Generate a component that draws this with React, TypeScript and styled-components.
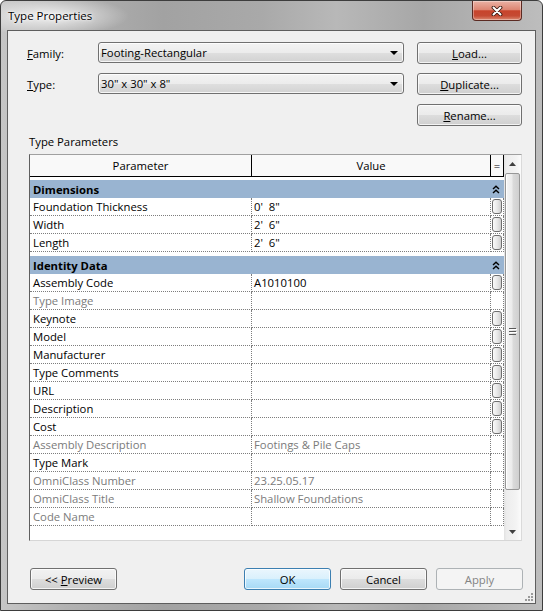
import React from "react";
import styled, { createGlobalStyle } from "styled-components";

const UI_FONT = `"Segoe UI", "Open Sans", "Noto Sans", Arial, sans-serif`;

const GlobalStyle = createGlobalStyle`
  html, body { margin: 0; padding: 0; background: #ffffff; }
  #root { width: 543px; height: 611px; }
`;

const Window = styled.div`
  position: relative;
  width: 543px;
  height: 611px;
  box-sizing: border-box;
  display: flex;
  flex-direction: column;
  border: 1px solid #3d3d3d;
  border-radius: 6px 6px 0 0;
  overflow: hidden;
  background:
    radial-gradient(ellipse 80px 20px at 48px 15px, rgba(255, 255, 255, 0.8), rgba(255, 255, 255, 0) 100%),
    linear-gradient(90deg, #c6c6c6 0%, #b2b2b2 12%, #a2a2a2 30%, #a9a9a9 48%, #b8b8b8 62%, #a7a7a7 78%, #bdbdbd 100%);
  font-family: ${UI_FONT};
  font-size: 11.3px;
  color: #000;
`;

const TitleBar = styled.div`
  flex: none;
  height: 29px;
  display: flex;
  justify-content: space-between;
  align-items: flex-start;
`;

const Title = styled.div`
  padding: 7px 0 0 7px;
  font-size: 11.5px;
  line-height: 15px;
  text-shadow: 0 0 5px #fff, 0 0 2px #fff;
`;

const CloseButton = styled.div`
  width: 50px;
  height: 20px;
  margin-right: 20px;
  box-sizing: border-box;
  border: 1px solid #5b2a22;
  border-top: none;
  border-radius: 0 0 4px 4px;
  background: linear-gradient(#eab2a5 0%, #dd8673 45%, #c7442c 52%, #c54a33 78%, #dc8a72 100%);
  box-shadow: inset 0 0 0 1px rgba(255, 255, 255, 0.35);
  display: flex;
  align-items: center;
  justify-content: center;
`;

const Client = styled.div`
  position: relative;
  flex: 1;
  margin: 0 6px 6px 6px;
  box-sizing: border-box;
  border: 1px solid #5e5e5e;
  background: #f0f0f0;
  display: flex;
  flex-direction: column;
  padding: 11px 12px 0 19px;
`;

const TopGrid = styled.div`
  display: grid;
  grid-template-columns: 58px 306px 105px;
  grid-auto-rows: 22px;
  column-gap: 13px;
  row-gap: 9px;
`;

const FieldLabel = styled.div`
  align-self: center;
  line-height: 15px;
`;

const Combo = styled.div`
  align-self: start;
  height: 21px;
  box-sizing: border-box;
  border: 1px solid #707070;
  border-radius: 3px;
  background: linear-gradient(#f3f3f3 0%, #ececec 50%, #dfdfdf 51%, #d2d2d2 100%);
  box-shadow: inset 0 0 0 1px rgba(255, 255, 255, 0.8);
  display: flex;
  align-items: center;
  justify-content: space-between;
  padding: 0 5px 0 2px;
  line-height: 15px;
`;

const DropArrow = styled.span`
  width: 0;
  height: 0;
  border-left: 4px solid transparent;
  border-right: 4px solid transparent;
  border-top: 4px solid #000;
`;

const PushButton = styled.button<{ $default?: boolean }>`
  font: inherit;
  color: #000;
  height: 22px;
  width: 100%;
  box-sizing: border-box;
  padding: 0;
  border: 1px solid ${(p) => (p.$default ? "#3c7fb1" : "#707070")};
  border-radius: 3px;
  background: ${(p) =>
    p.$default
      ? "linear-gradient(#eaf6fd 0%, #d9f0fc 50%, #bee6fd 51%, #a7d9f5 100%)"
      : "linear-gradient(#f2f2f2 0%, #ebebeb 50%, #dddddd 51%, #cfcfcf 100%)"};
  box-shadow: inset 0 0 0 1px rgba(255, 255, 255, 0.75);
  line-height: 15px;
  cursor: default;

  &:disabled {
    border-color: #adb2b5;
    background: #f4f4f4;
    color: #838383;
    box-shadow: none;
  }
`;

const FooterButton = styled(PushButton)`
  width: 87px;
`;

const SectionLabel = styled.div`
  margin: 8px 0 0 2px;
  line-height: 15px;
`;

const ParamTable = styled.div`
  margin: 5px 0 0 2px;
  width: 493px;
  height: 387px;
  box-sizing: border-box;
  border-top: 1px solid #a0a0a0;
  border-left: 1px solid #5f5f5f;
  border-right: 1px solid #dadada;
  border-bottom: 1px solid #d6d6d6;
  background: #fff;
  display: flex;
`;

const GridArea = styled.div`
  width: 474px;
  display: flex;
  flex-direction: column;
`;

const COLUMNS = "222px 239px 13px";

const HeaderRow = styled.div`
  flex: none;
  display: grid;
  grid-template-columns: ${COLUMNS};
  height: 22px;
  box-sizing: border-box;
  border-bottom: 1px solid #000;
  background: #f9f9f9;
`;

const HeaderCell = styled.div`
  border-right: 1px solid #000;
  display: flex;
  align-items: center;
  justify-content: center;
  line-height: 15px;
`;

const GroupRow = styled.div<{ $first?: boolean }>`
  flex: none;
  margin-top: ${(p) => (p.$first ? 3 : 4)}px;
  height: 18px;
  background: #99b4d1;
  display: flex;
  align-items: center;
  justify-content: space-between;
  padding: 0 4px 0 3px;
  font-weight: bold;
`;

const DataRow = styled.div`
  flex: none;
  display: grid;
  grid-template-columns: ${COLUMNS};
  height: 18px;
`;

const Cell = styled.div<{ $muted?: boolean; $pad?: number }>`
  box-sizing: border-box;
  border-right: 1px dotted #7d7d7d;
  border-bottom: 1px dotted #7d7d7d;
  padding-left: ${(p) => p.$pad ?? 3}px;
  line-height: 17px;
  white-space: pre;
  overflow: hidden;
  color: ${(p) => (p.$muted ? "#7b7b7b" : "#000")};
`;

const ButtonCell = styled.div`
  box-sizing: border-box;
  border-right: 1px dotted #7d7d7d;
  border-bottom: 1px dotted #7d7d7d;
  padding: 1px 0 0 1px;
`;

const AssocButton = styled.div`
  width: 10px;
  height: 15px;
  box-sizing: border-box;
  border: 1px solid #6e6e6e;
  border-radius: 3px;
  background: linear-gradient(90deg, #fafafa 0%, #e9e9e9 50%, #d0d0d0 100%);
`;

const ScrollBar = styled.div`
  width: 17px;
  display: flex;
  flex-direction: column;
  background: linear-gradient(90deg, #e2e2e2 0%, #ededed 15%, #f3f3f3 70%, #fbfbfb 100%);
`;

const ArrowButton = styled.div`
  flex: none;
  height: 17px;
  display: flex;
  align-items: center;
  justify-content: center;
`;

const Track = styled.div`
  flex: 1;
  display: flex;
  flex-direction: column;
`;

const Thumb = styled.div`
  flex: none;
  height: 317px;
  margin: 1px 1px 0 1px;
  box-sizing: border-box;
  border: 1px solid #979797;
  border-radius: 2px;
  background: linear-gradient(90deg, #f6f6f6 0%, #ebebeb 45%, #dadada 55%, #cfcfcf 100%);
  box-shadow: inset 1px 0 0 #fff;
  display: flex;
  align-items: center;
  justify-content: center;
`;

const Footer = styled.div`
  margin-top: 27px;
  padding-left: 3px;
  display: flex;
  justify-content: space-between;
`;

const FooterGroup = styled.div`
  display: flex;
  gap: 9px;
`;

const ResizeGrip = styled.svg`
  position: absolute;
  right: 2px;
  bottom: 2px;
`;

type Param = { name: string; value?: string; button?: boolean; muted?: boolean };
type Group = { title: string; params: Param[] };

const groups: Group[] = [
  {
    title: "Dimensions",
    params: [
      { name: "Foundation Thickness", value: "0'  8\"", button: true },
      { name: "Width", value: "2'  6\"", button: true },
      { name: "Length", value: "2'  6\"", button: true },
    ],
  },
  {
    title: "Identity Data",
    params: [
      { name: "Assembly Code", value: "A1010100", button: true },
      { name: "Type Image", muted: true },
      { name: "Keynote", button: true },
      { name: "Model", button: true },
      { name: "Manufacturer", button: true },
      { name: "Type Comments", button: true },
      { name: "URL", button: true },
      { name: "Description", button: true },
      { name: "Cost", button: true },
      { name: "Assembly Description", value: "Footings & Pile Caps", muted: true },
      { name: "Type Mark" },
      { name: "OmniClass Number", value: "23.25.05.17", muted: true },
      { name: "OmniClass Title", value: "Shallow Foundations", muted: true },
      { name: "Code Name", muted: true },
    ],
  },
];

const CloseGlyph = () => (
  <svg width="12" height="10" viewBox="0 0 12 10">
    <path d="M2.5 1.5 L9.5 8.5 M9.5 1.5 L2.5 8.5" stroke="#3a1a12" strokeWidth="3.8" strokeLinecap="round" />
    <path d="M2.5 1.5 L9.5 8.5 M9.5 1.5 L2.5 8.5" stroke="#ffffff" strokeWidth="2" strokeLinecap="round" />
  </svg>
);

const CollapseChevrons = () => (
  <svg width="8" height="9" viewBox="0 0 8 9">
    <path d="M1 4 L4 1.2 L7 4 M1 8 L4 5.2 L7 8" stroke="#000" strokeWidth="1.4" fill="none" />
  </svg>
);

const Triangle = ({ up }: { up?: boolean }) => (
  <svg width="7" height="4" viewBox="0 0 7 4">
    <path d={up ? "M0 4 L3.5 0 L7 4 Z" : "M0 0 L3.5 4 L7 0 Z"} fill="#3f3f3f" />
  </svg>
);

const GripLines = () => (
  <svg width="8" height="7" viewBox="0 0 8 7">
    <path d="M0 0.5 H7 M0 3.5 H7 M0 6.5 H7" stroke="#595959" strokeWidth="1" />
    <path d="M1 1.5 H8 M1 4.5 H8" stroke="#ffffff" strokeWidth="1" />
  </svg>
);

export default function App() {
  return (
    <>
      <GlobalStyle />
      <Window>
        <TitleBar>
          <Title>Type Properties</Title>
          <CloseButton>
            <CloseGlyph />
          </CloseButton>
        </TitleBar>
        <Client>
          <TopGrid>
            <FieldLabel>
              <u>F</u>amily:
            </FieldLabel>
            <Combo>
              <span>Footing-Rectangular</span>
              <DropArrow />
            </Combo>
            <PushButton>
              <u>L</u>oad...
            </PushButton>
            <FieldLabel>
              <u>T</u>ype:
            </FieldLabel>
            <Combo>
              <span>30" x 30" x 8"</span>
              <DropArrow />
            </Combo>
            <PushButton>
              <u>D</u>uplicate...
            </PushButton>
            <span />
            <span />
            <PushButton>
              <u>R</u>ename...
            </PushButton>
          </TopGrid>

          <SectionLabel>Type Parameters</SectionLabel>
          <ParamTable>
            <GridArea>
              <HeaderRow>
                <HeaderCell>Parameter</HeaderCell>
                <HeaderCell>Value</HeaderCell>
                <HeaderCell>=</HeaderCell>
              </HeaderRow>
              {groups.map((g, i) => (
                <React.Fragment key={g.title}>
                  <GroupRow $first={i === 0}>
                    <span>{g.title}</span>
                    <CollapseChevrons />
                  </GroupRow>
                  {g.params.map((p) => (
                    <DataRow key={p.name}>
                      <Cell $muted={p.muted}>{p.name}</Cell>
                      <Cell $muted={p.muted} $pad={2}>
                        {p.value ?? ""}
                      </Cell>
                      <ButtonCell>{p.button && <AssocButton />}</ButtonCell>
                    </DataRow>
                  ))}
                </React.Fragment>
              ))}
            </GridArea>
            <ScrollBar>
              <ArrowButton>
                <Triangle up />
              </ArrowButton>
              <Track>
                <Thumb>
                  <GripLines />
                </Thumb>
              </Track>
              <ArrowButton>
                <Triangle />
              </ArrowButton>
            </ScrollBar>
          </ParamTable>

          <Footer>
            <FooterButton>
              {"<< "}
              <u>P</u>review
            </FooterButton>
            <FooterGroup>
              <FooterButton $default>OK</FooterButton>
              <FooterButton>Cancel</FooterButton>
              <FooterButton disabled>Apply</FooterButton>
            </FooterGroup>
          </Footer>

          <ResizeGrip width="8" height="8" viewBox="0 0 8 8">
            <g fill="#9a9a9a">
              <rect x="6" y="0" width="2" height="2" />
              <rect x="3" y="3" width="2" height="2" />
              <rect x="6" y="3" width="2" height="2" />
              <rect x="0" y="6" width="2" height="2" />
              <rect x="3" y="6" width="2" height="2" />
              <rect x="6" y="6" width="2" height="2" />
            </g>
          </ResizeGrip>
        </Client>
      </Window>
    </>
  );
}
